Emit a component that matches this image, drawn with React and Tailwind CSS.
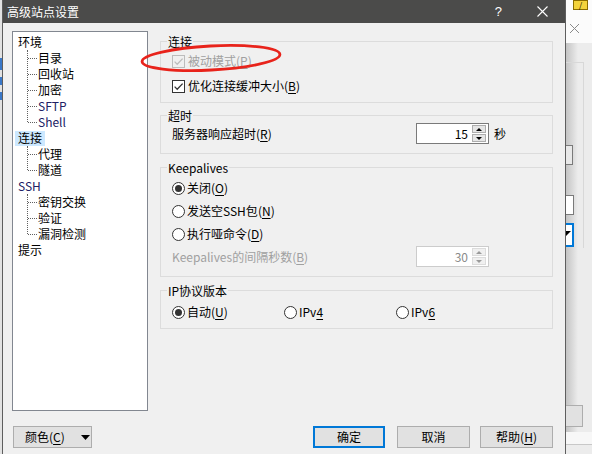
import React from "react";

const tree = [
  { label: "环境", children: ["目录", "回收站", "加密", "SFTP", "Shell"] },
  { label: "连接", selected: true, children: ["代理", "隧道"] },
  { label: "SSH", children: ["密钥交换", "验证", "漏洞检测"] },
  { label: "提示", children: [] },
];

const latin = ["SFTP", "Shell", "SSH"];

function Acc({ text, k, disabled }) {
  // text with an accelerator letter in parentheses
  return (
    <span className={disabled ? "text-[#a0a0a0]" : ""}>
      {text}
      {k && (
        <>
          (<span className="underline underline-offset-2">{k}</span>)
        </>
      )}
    </span>
  );
}

function Check({ checked, disabled }) {
  return (
    <span
      className={
        "w-[13px] h-[13px] border flex items-center justify-center shrink-0 " +
        (disabled ? "border-[#bcbcbc] bg-[#f0f0f0]" : "border-[#333333] bg-white")
      }
    >
      {checked && (
        <svg width="11" height="11" viewBox="0 0 11 11">
          <path
            d="M1.6 5.6 L4.2 8.2 L9.6 2.6"
            stroke={disabled ? "#bcbcbc" : "#333333"}
            strokeWidth="1.3"
            fill="none"
          />
        </svg>
      )}
    </span>
  );
}

function Radio({ on }) {
  return (
    <span className="w-[13px] h-[13px] rounded-full border border-[#333333] bg-white flex items-center justify-center shrink-0">
      {on && <span className="w-[7px] h-[7px] rounded-full bg-[#333333]" />}
    </span>
  );
}

function Spin({ value, disabled }) {
  const b = disabled ? "border-[#cccccc]" : "border-[#7a7a7a]";
  const arrow = disabled ? "#9a9a9a" : "#000000";
  return (
    <div className={"w-[73px] h-[21px] border flex items-center bg-white " + b}>
      <span
        className={
          "flex-1 text-right pr-[4px] " + (disabled ? "text-[#8a8a8a]" : "text-black")
        }
      >
        {value}
      </span>
      <div className="flex flex-col gap-[1px] mr-[2px] w-[14px]">
        {["M2 5 L5 2 L8 5 Z", "M2 2 L5 5 L8 2 Z"].map((d, i) => (
          <span
            key={i}
            className={
              "h-[8px] border flex items-center justify-center " +
              (disabled ? "border-[#dcdcdc] bg-[#f0f0f0]" : "border-[#adadad] bg-[#e5e5e5]")
            }
          >
            <svg width="10" height="7" viewBox="0 0 10 7">
              <path d={d} fill={arrow} />
            </svg>
          </span>
        ))}
      </div>
    </div>
  );
}

function Group({ title, className, children }) {
  return (
    <div className={"relative border border-[#dcdcdc] " + className}>
      <span className="absolute top-[-8px] left-[6px] px-[1px] leading-[16px] bg-[#f0f0f0]">
        {title}
      </span>
      {children}
    </div>
  );
}

function Tree() {
  return (
    <div className="w-[136px] h-[380px] border border-[#828790] bg-white pt-[2px]">
      {tree.map((n) => (
        <div key={n.label}>
          <div className="h-[16px] flex items-center">
            <span
              className={
                "ml-[2px] px-[3px] h-[15px] flex items-center " +
                (n.selected ? "bg-[#cce8ff]" : "") +
                (latin.includes(n.label) ? " text-[#202064]" : "")
              }
            >
              {n.label}
            </span>
          </div>
          {n.children.length > 0 && (
            <div className="relative">
              <span
                className="absolute left-[14px] top-0 border-l border-dotted border-[#606060]"
                style={{ height: (n.children.length - 1) * 16 + 8 }}
              />
              {n.children.map((c) => (
                <div key={c} className="h-[16px] flex items-center">
                  <span className="ml-[15px] w-[9px] border-t border-dotted border-[#606060]" />
                  <span
                    className={"ml-[1px] " + (latin.includes(c) ? "text-[#202064]" : "")}
                  >
                    {c}
                  </span>
                </div>
              ))}
            </div>
          )}
        </div>
      ))}
    </div>
  );
}

function Btn({ children, primary, className }) {
  return (
    <div
      className={
        "h-[22px] flex items-center justify-center bg-[#e1e1e1] " +
        (primary ? "border-2 border-[#0078d7]" : "border border-[#adadad]") +
        " " +
        className
      }
    >
      {children}
    </div>
  );
}

export default function App() {
  return (
    <div className="relative w-[592px] h-[454px] overflow-hidden bg-[#e6e6e6] text-[12px] leading-[16px] text-black font-['Noto_Sans_CJK_SC','Noto_Sans',sans-serif]">
      {/* window behind, left strip */}
      <div className="absolute left-0 top-0 w-[3px] h-full bg-[#e2e2e2]">
        <div className="mt-[58px] h-[12px] bg-[#3a78c8]" />
        <div className="mt-[7px] h-[8px] bg-[#3a78c8]" />
        <div className="mt-[7px] h-[8px] bg-[#3a78c8]" />
      </div>

      {/* window behind, right side */}
      <div className="absolute left-[566px] top-0 w-[26px] h-full bg-[#ececec]">
        <div className="h-[43px] bg-[#fbfbfb] relative">
          <div className="absolute left-[7px] top-0 w-[15px] h-[10px] bg-[#f3d33c] border border-[#8a6d00] flex items-center justify-center text-[8px] leading-none">
            /
          </div>
          <svg className="absolute left-[3px] top-[23px]" width="11" height="11" viewBox="0 0 11 11">
            <path d="M1 1 L10 10 M10 1 L1 10" stroke="#8a8a8a" strokeWidth="1" />
          </svg>
        </div>
        <div className="absolute left-0 top-[43px] w-[12px] h-[392px] bg-gradient-to-r from-[#c4c4c4] to-transparent" />
        <div className="absolute left-0 top-[62px] w-[18px] h-[186px] border-r border-t border-[#d8d8d8]" />
        <div className="absolute left-0 top-[145px] w-[7px] h-[20px] border border-l-0 border-[#7a7a7a] bg-[#e8e8e8]" />
        <div className="absolute left-0 top-[195px] w-[8px] h-[20px] border border-l-0 border-[#7a7a7a] bg-white" />
        <div className="absolute left-0 top-[223px] w-[8px] h-[24px] border-2 border-l-0 border-[#0078d7] bg-white">
          <svg className="absolute left-0 top-[6px]" width="5" height="5" viewBox="0 0 5 5">
            <path d="M0 0 L5 0 L0 5 Z" fill="#000000" />
          </svg>
        </div>
        <div className="absolute left-0 top-[405px] w-[17px] h-[22px] border border-l-0 border-[#adadad] bg-[#e1e1e1]" />
        <div className="absolute left-0 top-[432px] w-full h-[13px] bg-[#f7f7f7] border-b border-[#c8c8c8]" />
      </div>

      {/* dialog */}
      <div className="absolute left-[2px] top-0 w-[564px] h-[470px] flex flex-col bg-[#f0f0f0] border-x border-[#5e5e5e]">
        <div className="h-[23px] shrink-0 bg-[#4b4b4a] flex items-center text-white pl-[4px]">
          <span className="text-[12px]">高级站点设置</span>
          <span className="ml-auto mr-[35px] text-[13px] font-['Liberation_Sans',sans-serif]">?</span>
          <svg className="mr-[17px]" width="11" height="11" viewBox="0 0 11 11">
            <path d="M0.5 0.5 L10.5 10.5 M10.5 0.5 L0.5 10.5" stroke="#ffffff" strokeWidth="1.1" />
          </svg>
        </div>

        <div className="flex pl-[9px] pt-[8px]">
          <Tree />

          <div className="relative ml-[12px] mt-[10px] w-[393px] flex flex-col">
            {/* red marker ellipse */}
            <svg
              className="absolute left-[-21px] top-[1px] pointer-events-none z-10"
              width="145"
              height="32"
              viewBox="0 0 145 32"
            >
              <ellipse
                cx="72"
                cy="16"
                rx="69"
                ry="12"
                transform="rotate(-3 72 16)"
                fill="none"
                stroke="#e8231b"
                strokeWidth="2.8"
              />
            </svg>

            <Group title="连接" className="h-[62px] pt-[11px] pl-[11px]">
              <div className="h-[16px] flex items-center gap-[3px]">
                <Check checked disabled />
                <Acc text="被动模式" k="P" disabled />
              </div>
              <div className="h-[16px] mt-[9px] flex items-center gap-[3px]">
                <Check checked />
                <Acc text="优化连接缓冲大小" k="B" />
              </div>
            </Group>

            <Group title="超时" className="mt-[12px] h-[39px] pt-[7px] pl-[11px]">
              <div className="h-[21px] flex items-center">
                <span className="w-[244px]">
                  <Acc text="服务器响应超时" k="R" />
                </span>
                <Spin value="15" />
                <span className="ml-[5px]">秒</span>
              </div>
            </Group>

            <Group title="Keepalives" className="mt-[13px] h-[110px] pt-[12px] pl-[11px]">
              <div className="h-[16px] flex items-center gap-[2px]">
                <Radio on />
                <Acc text="关闭" k="O" />
              </div>
              <div className="h-[16px] mt-[7px] flex items-center gap-[2px]">
                <Radio />
                <Acc text="发送空SSH包" k="N" />
              </div>
              <div className="h-[16px] mt-[7px] flex items-center gap-[2px]">
                <Radio />
                <Acc text="执行哑命令" k="D" />
              </div>
              <div className="h-[21px] mt-[4px] flex items-center">
                <span className="w-[244px]">
                  <Acc text="Keepalives的间隔秒数" k="B" disabled />
                </span>
                <Spin value="30" disabled />
              </div>
            </Group>

            <Group title="IP协议版本" className="mt-[13px] h-[39px] pt-[13px] pl-[11px]">
              <div className="h-[16px] flex items-center">
                <div className="w-[112px] flex items-center gap-[2px]">
                  <Radio on />
                  <Acc text="自动" k="U" />
                </div>
                <div className="w-[112px] flex items-center gap-[2px]">
                  <Radio />
                  <span>
                    IPv<span className="underline underline-offset-2">4</span>
                  </span>
                </div>
                <div className="flex items-center gap-[2px]">
                  <Radio />
                  <span>
                    IPv<span className="underline underline-offset-2">6</span>
                  </span>
                </div>
              </div>
            </Group>
          </div>
        </div>

        <div className="flex items-center mt-[15px] pl-[10px]">
          <Btn className="w-[79px] justify-start pl-[11px]">
            <Acc text="颜色" k="C" />
            <svg className="ml-[16px]" width="9" height="5" viewBox="0 0 9 5">
              <path d="M0 0 L9 0 L4.5 5 Z" fill="#000000" />
            </svg>
          </Btn>
          <Btn primary className="ml-[221px] w-[72px]">
            确定
          </Btn>
          <Btn className="ml-[12px] w-[73px]">取消</Btn>
          <Btn className="ml-[10px] w-[73px]">
            <Acc text="帮助" k="H" />
          </Btn>
        </div>
      </div>
    </div>
  );
}
